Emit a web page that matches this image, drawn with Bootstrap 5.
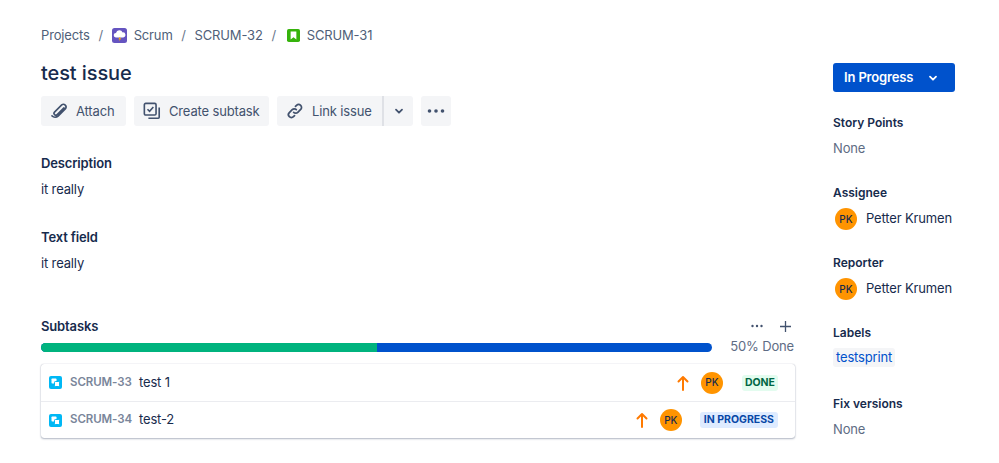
<!DOCTYPE html>
<html lang="en">
<head>
<meta charset="UTF-8">
<meta name="viewport" content="width=device-width, initial-scale=1.0">
<title>test issue</title>
<link href="https://cdn.jsdelivr.net/npm/bootstrap@5.3.0/dist/css/bootstrap.min.css" rel="stylesheet">
<style>
body { font-family: Inter, "Liberation Sans", sans-serif; font-size: 13px; letter-spacing: -.15px; color: #172b4d; background: #fff; }
.page-wrap { padding: 0 44px 0 41px; gap: 38px; height: 463px; overflow: hidden; white-space: nowrap; }
.main-col { width: 754px; flex: none; }
.side-col { width: 122px; flex: none; padding-top: 63px; }

.crumbs { height: 20px; margin-top: 25px; color: #505f79; line-height: 20px; }
.crumbs .sep { margin: 0 8.7px; color: #6b778c; }
.crumb-ico { width: 15px; height: 15px; margin-right: 7px; flex: none; }
.crumb-ico-sm { width: 13px; height: 13px; margin-left: 2px; }
.issue-title { font-size: 20px; font-weight: 500; line-height: 28px; margin: 14px 0 9px; color: #172b4d; letter-spacing: -.1px; }

.tool-btn { height: 30px; background: #f4f5f7; color: #42526e; border-radius: 3px; border: 0; padding: 0 0 0 9px; line-height: 30px; font-size: 13px; letter-spacing: -.15px; }
.tool-btn svg { flex: none; }
.btn-attach { width: 85px; }
.btn-subtask { width: 135px; }
.btn-link-issue { border-radius: 3px 0 0 3px; border-right: 2px solid #dfe1e6; width: 107px; }
.btn-caret { border-radius: 0 3px 3px 0; width: 29px; padding: 0; }
.btn-more { width: 30px; padding: 0; }

.field-head { font-weight: 600; font-size: 13px; line-height: 20px; }
.field-text { line-height: 20px; margin-top: 6px; }
.desc-head { margin-top: 27px; }
.text-head { margin-top: 28px; }
.sub-head { margin-top: 43px; height: 20px; }
.sub-tools { color: #42526e; gap: 15px; padding-right: 3px; }
.bar-line { margin-top: 1px; height: 20px; }
.bar-track { width: 671px; height: 9px; border-radius: 5px; overflow: hidden; background: #0052cc; }
.bar-done { background: #00b37e; height: 100%; }
.bar-pct { color: #5e6c84; margin-left: auto; padding-right: 1px; }

.sub-list { margin-top: 7px; border-radius: 3px; box-shadow: 0 1px 2px rgba(9,30,66,.3), 0 0 1px rgba(9,30,66,.3); width: 754px; }
.sub-row { height: 37px; padding: 0 17px 0 8px; }
.sub-row + .sub-row { border-top: 1px solid #ebecf0; }
.sub-key { color: #7a869a; font-weight: 600; font-size: 11.5px; margin-left: 8px; width: 69px; letter-spacing: -.1px; }
.pk { width: 22px; height: 22px; border-radius: 50%; background: #ff9400; color: #172b4d; font-size: 10px; font-weight: 500; flex: none; letter-spacing: 0; }
.pri-arrow { margin-right: 12px; }
.row-avatar { margin-right: 18px; }
.lozenge { font-size: 10.5px; font-weight: 700; line-height: 16px; height: 16px; padding: 0 4px; border-radius: 3px; letter-spacing: 0; }
.loz-done { background: #e3fcef; color: #006644; padding: 0 3px; margin-left: 1px; }
.loz-prog { background: #deebff; color: #0747a6; }

.status-btn { width: 122px; height: 29px; background: #0052cc; color: #fff; font-weight: 600; border: 0; border-radius: 3px; padding: 1px 11px 0; margin-bottom: 23px; font-size: 13px; letter-spacing: -.15px; }
.status-chev { margin-right: 6px; }
.side-label { font-size: 12px; font-weight: 600; line-height: 16px; letter-spacing: 0; }
.side-none { color: #5e6c84; line-height: 20px; margin-top: 7px; margin-bottom: 27px; }
.person { margin-top: 4px; margin-bottom: 22px; height: 28px; padding-left: 2px; gap: 9px; }
.tag { display: inline-block; background: #f4f5f7; color: #0052cc; border-radius: 3px; padding: 0 3px; line-height: 19px; margin-top: 7px; margin-bottom: 29px; }
</style>
</head>
<body>
<div class="page-wrap d-flex">
  <div class="main-col">
    <div class="crumbs d-flex align-items-center">
      <span>Projects</span><span class="sep">/</span>
      <svg class="crumb-ico" viewBox="0 0 15 15"><rect width="15" height="15" rx="2.5" fill="#6554c0"/><path d="M3.800 9.400a2.200 2.200 0 0 1 .2-4.400 3.500 3.500 0 0 1 6.600-.6 2.500 2.500 0 0 1 .6 5z" fill="#fff"/><path d="M8.200 8.500 6.300 11.200h1.300l-.5 2 2.200-3H8z" fill="#ffab00"/></svg>
      <span>Scrum</span><span class="sep">/</span>
      <span>SCRUM-32</span><span class="sep">/</span>
      <svg class="crumb-ico crumb-ico-sm" viewBox="0 0 15 15"><rect width="15" height="15" rx="2" fill="#36b30c"/><path d="M4.200 3h6.600v9l-3.300-2.500L4.200 12z" fill="#fff"/></svg>
      <span>SCRUM-31</span>
    </div>
    <h1 class="issue-title">test issue</h1>
    <div class="d-flex">
      <button class="tool-btn btn-attach d-flex align-items-center me-2" type="button">
        <svg class="me-2" width="18" height="18" viewBox="0 0 20 20" fill="none" stroke="#42526e" stroke-width="1.800" stroke-linecap="round"><path d="M15.500 6.500 8 14a2 2 0 0 1-3-2.800l8-8a3 3 0 0 1 4.200 4.200L9 15.600a5 5 0 0 1-6.800-.2"/></svg>
        Attach
      </button>
      <button class="tool-btn btn-subtask d-flex align-items-center me-2" type="button">
        <svg class="me-2" width="18" height="18" viewBox="0 0 20 20" fill="none" stroke="#42526e" stroke-width="1.800"><rect x="1.500" y="1.500" width="13" height="13" rx="1.500"/><path d="M5 8l2.300 2.300L11.500 5.500"/><path d="M18 6v11a1 1 0 0 1-1 1H6"/></svg>
        Create subtask
      </button>
      <button class="tool-btn btn-link-issue d-flex align-items-center" type="button">
        <svg class="me-2" width="18" height="18" viewBox="0 0 20 20" fill="none" stroke="#42526e" stroke-width="1.900" stroke-linecap="round"><path d="M8.500 11.500a3.200 3.200 0 0 0 4.600 0l3.200-3.200a3.200 3.200 0 0 0-4.600-4.600L10.500 4.900"/><path d="M11.500 8.500a3.200 3.200 0 0 0-4.600 0l-3.200 3.200a3.200 3.200 0 0 0 4.600 4.600l1.200-1.200"/></svg>
        Link issue
      </button>
      <button class="tool-btn btn-caret d-flex align-items-center justify-content-center me-2" type="button" aria-label="More link options">
        <svg width="10" height="7" viewBox="0 0 10 7" fill="none" stroke="#42526e" stroke-width="1.800" stroke-linecap="round" stroke-linejoin="round"><path d="M2 1.700l3 3 3-3"/></svg>
      </button>
      <button class="tool-btn btn-more d-flex align-items-center justify-content-center" type="button" aria-label="More actions">
        <svg width="18" height="4" viewBox="0 0 18 4" fill="#42526e"><circle cx="2.500" cy="2" r="1.800"/><circle cx="9" cy="2" r="1.800"/><circle cx="15.500" cy="2" r="1.800"/></svg>
      </button>
    </div>

    <div class="field-head desc-head">Description</div>
    <div class="field-text">it really</div>
    <div class="field-head text-head">Text field</div>
    <div class="field-text">it really</div>

    <div class="sub-head d-flex align-items-center justify-content-between">
      <span class="field-head">Subtasks</span>
      <span class="sub-tools d-flex align-items-center">
        <svg width="14" height="4" viewBox="0 0 14 4" fill="#42526e"><circle cx="2.500" cy="2" r="1.200"/><circle cx="7" cy="2" r="1.200"/><circle cx="11.500" cy="2" r="1.200"/></svg>
        <svg width="13" height="13" viewBox="0 0 13 13" stroke="#42526e" stroke-width="1.300"><path d="M6.500 1v11M1 6.500h11"/></svg>
      </span>
    </div>
    <div class="bar-line d-flex align-items-center">
      <div class="bar-track"><div class="bar-done" style="width: 50%"></div></div>
      <span class="bar-pct">50% Done</span>
    </div>
    <div class="sub-list">
      <div class="sub-row d-flex align-items-center">
        <svg width="13" height="13" viewBox="0 0 13 13"><rect width="13" height="13" rx="2" fill="#00b8f5"/><rect x="2.500" y="2.500" width="5" height="5" rx=".8" fill="#fff"/><rect x="5.500" y="5.500" width="5" height="5" rx=".8" fill="#fff" stroke="#00b8f5"/></svg>
        <span class="sub-key">SCRUM-33</span>
        <span>test 1</span>
        <svg class="pri-arrow ms-auto" width="12" height="16" viewBox="0 0 12 16" fill="none" stroke="#ff7a00" stroke-width="2" stroke-linecap="round" stroke-linejoin="round"><path d="M6 15V2M1.500 6.500 6 2l4.500 4.500"/></svg>
        <span class="pk row-avatar d-flex align-items-center justify-content-center">PK</span>
        <span class="lozenge loz-done">DONE</span>
      </div>
      <div class="sub-row d-flex align-items-center">
        <svg width="13" height="13" viewBox="0 0 13 13"><rect width="13" height="13" rx="2" fill="#00b8f5"/><rect x="2.500" y="2.500" width="5" height="5" rx=".8" fill="#fff"/><rect x="5.500" y="5.500" width="5" height="5" rx=".8" fill="#fff" stroke="#00b8f5"/></svg>
        <span class="sub-key">SCRUM-34</span>
        <span>test-2</span>
        <svg class="pri-arrow ms-auto" width="12" height="16" viewBox="0 0 12 16" fill="none" stroke="#ff7a00" stroke-width="2" stroke-linecap="round" stroke-linejoin="round"><path d="M6 15V2M1.500 6.500 6 2l4.500 4.500"/></svg>
        <span class="pk row-avatar d-flex align-items-center justify-content-center">PK</span>
        <span class="lozenge loz-prog">IN PROGRESS</span>
      </div>
    </div>
  </div>

  <div class="side-col">
    <button class="status-btn d-flex align-items-center justify-content-between" type="button">
      In Progress
      <svg class="status-chev" width="10" height="7" viewBox="0 0 10 7" fill="none" stroke="#fff" stroke-width="1.800" stroke-linecap="round" stroke-linejoin="round"><path d="M2 1.700l3 3 3-3"/></svg>
    </button>
    <div class="side-label">Story Points</div>
    <div class="side-none">None</div>
    <div class="side-label">Assignee</div>
    <div class="person d-flex align-items-center"><span class="pk d-flex align-items-center justify-content-center">PK</span>Petter Krumen</div>
    <div class="side-label">Reporter</div>
    <div class="person d-flex align-items-center"><span class="pk d-flex align-items-center justify-content-center">PK</span>Petter Krumen</div>
    <div class="side-label">Labels</div>
    <span class="tag">testsprint</span>
    <div class="side-label">Fix versions</div>
    <div class="side-none">None</div>
  </div>
</div>
<script src="https://cdn.jsdelivr.net/npm/bootstrap@5.3.0/dist/js/bootstrap.bundle.min.js"></script>
</body>
</html>
